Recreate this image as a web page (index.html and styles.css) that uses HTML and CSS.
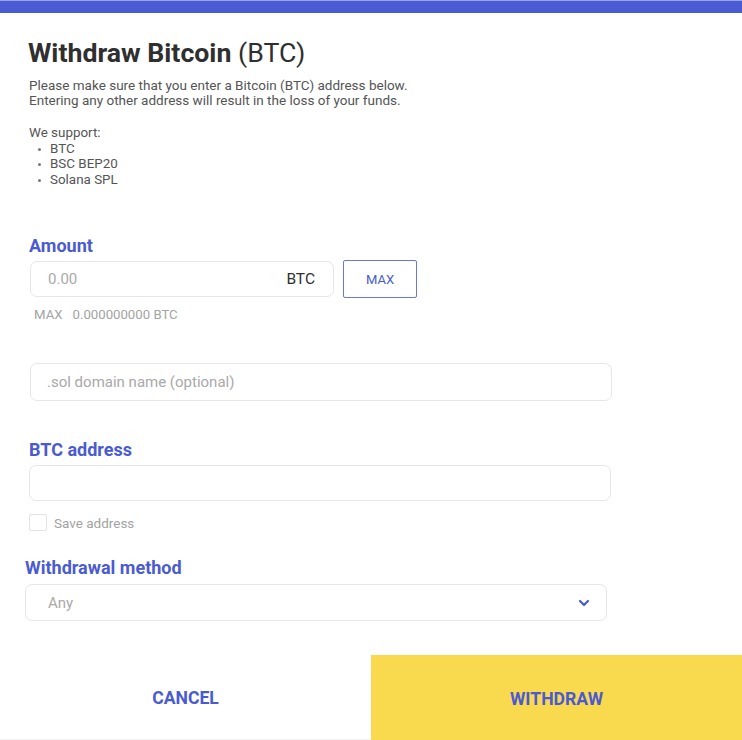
FILE: index.html
```html
<!DOCTYPE html>
<html lang="en">
<head>
<meta charset="utf-8">
<title>Withdraw Bitcoin</title>
<link rel="stylesheet" href="styles.css">
</head>
<body>
<div class="page">
  <div class="topbar"></div>
  <main class="content">
    <h1 class="title"><strong>Withdraw Bitcoin</strong> (BTC)</h1>
    <p class="desc">Please make sure that you enter a Bitcoin (BTC) address below.<br>Entering any other address will result in the loss of your funds.</p>
    <div class="support">
      <div>We support:</div>
      <ul class="support-list">
        <li>BTC</li>
        <li>BSC BEP20</li>
        <li>Solana SPL</li>
      </ul>
    </div>

    <section class="amount">
      <div class="label">Amount</div>
      <div class="amount-row">
        <div class="field amount-field">
          <span class="placeholder">0.00</span>
          <span class="unit">BTC</span>
        </div>
        <button class="max-btn" type="button">MAX</button>
      </div>
      <div class="max-info"><span class="max-key">MAX</span><span>0.000000000 BTC</span></div>
    </section>

    <div class="field domain-field"><span class="placeholder">.sol domain name (optional)</span></div>

    <section class="address">
      <div class="label">BTC address</div>
      <div class="field address-field"></div>
      <label class="save">
        <span class="checkbox"></span>
        <span>Save address</span>
      </label>
    </section>

    <section class="method">
      <div class="label">Withdrawal method</div>
      <div class="field select-field">
        <span class="placeholder">Any</span>
        <svg class="chevron" width="12" height="8" viewBox="0 0 12 8"><path d="M2 2 L6 6 L10 2" fill="none" stroke="#4a5bd2" stroke-width="2.2" stroke-linecap="round" stroke-linejoin="round"/></svg>
      </div>
    </section>
  </main>
  <footer class="actions">
    <button class="act cancel" type="button">CANCEL</button>
    <button class="act withdraw" type="button">WITHDRAW</button>
  </footer>
</div>
</body>
</html>
```

FILE: styles.css
```css
* { box-sizing: border-box; }
html, body { margin: 0; padding: 0; background: #fff; }
body {
  font-family: Roboto, "Liberation Sans", Arial, sans-serif;
  color: #333;
  width: 742px;
  height: 740px;
  overflow: hidden;
}
.page {
  display: flex;
  flex-direction: column;
  height: 740px;
}
.topbar {
  height: 13px;
  background: #4b5bd3;
  border-top: 1px solid #9aa3e6;
  flex: none;
}
.content {
  flex: 1;
  padding-left: 29px;
}
.title {
  margin: 25px 0 0 -1px;
  font-size: 26.7px;
  line-height: 31px;
  font-weight: 400;
  color: #2f2f2f;
}
.title strong { font-weight: 700; }
.desc {
  margin: 9px 0 0;
  font-size: 13.5px;
  line-height: 15px;
  color: #555;
}
.support {
  margin-top: 17px;
  font-size: 13.4px;
  line-height: 15.5px;
  color: #555;
}
.support-list {
  list-style: none;
  margin: 0;
  padding: 0;
}
.support-list li {
  position: relative;
  padding-left: 21px;
}
.support-list li::before {
  content: "";
  position: absolute;
  left: 9px;
  top: 7px;
  width: 3px;
  height: 3px;
  border-radius: 50%;
  background: #777;
}
.label {
  font-size: 18px;
  line-height: 20px;
  font-weight: 700;
  color: #4a5bd2;
}
.amount { margin-top: 49px; }
.amount-row {
  margin-top: 4px;
  display: flex;
  align-items: center;
  gap: 9px;
}
.field {
  border: 1px solid #e6e6e6;
  border-radius: 7px;
  background: #fff;
  display: flex;
  align-items: center;
}
.placeholder {
  color: #a9a9a9;
  font-size: 15px;
}
.amount-field {
  margin-left: 1px;
  width: 304px;
  height: 36px;
  padding: 0 18px 0 17px;
  justify-content: space-between;
}
.unit {
  font-size: 15.5px;
  color: #2f2f2f;
}
.max-btn {
  width: 74px;
  height: 38px;
  border: 1px solid #6a78dc;
  border-radius: 2px;
  background: #fff;
  color: #4a5bd2;
  font-family: inherit;
  font-size: 13px;
  padding: 1px 0 0;
}
.max-info {
  margin: 10px 0 0 5px;
  font-size: 13.2px;
  line-height: 14px;
  color: #a3a3a3;
  display: flex;
  gap: 10px;
}
.domain-field {
  margin: 41px 0 0 1px;
  width: 582px;
  height: 38px;
  padding-left: 16px;
}
.address { margin-top: 39px; }
.address-field {
  margin-top: 5px;
  width: 582px;
  height: 36px;
}
.save {
  margin-top: 13px;
  display: flex;
  align-items: center;
  gap: 7px;
  font-size: 13.5px;
  color: #a3a3a3;
}
.checkbox {
  width: 18px;
  height: 17px;
  border: 1px solid #e3e3e3;
  border-radius: 2px;
}
.method {
  margin: 27px 0 0 -4px;
}
.select-field {
  margin-top: 6px;
  width: 582px;
  height: 37px;
  padding: 0 16px 0 22px;
  justify-content: space-between;
}
.chevron { display: block; margin-top: 0; }
.actions {
  flex: none;
  height: 85px;
  display: flex;
}
.act {
  flex: 1;
  border: 0;
  margin: 0;
  font-family: inherit;
  font-size: 17.6px;
  font-weight: 700;
  color: #4a5bd2;
  padding: 2px 0 0;
}
.cancel {
  background: #fff;
  border-bottom: 1px solid #f2f2f2;
}
.withdraw {
  background: #f9da4f;
}
```
